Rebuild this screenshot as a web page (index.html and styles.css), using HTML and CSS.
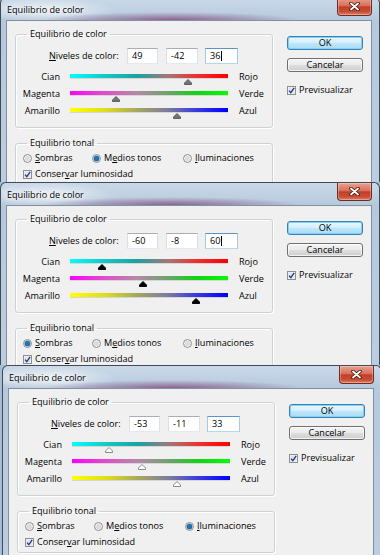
FILE: index.html
```html
<!DOCTYPE html>
<html lang="es">
<head>
    <meta charset="UTF-8">
    <title>Equilibrio de color</title>
    <link rel="stylesheet" href="styles.css">
</head>
<body>

    <!-- dialogo 1: medios tonos -->
    <div class="dlg d1">
        <div class="titlebar">
            <span class="title">Equilibrio de color</span>
            <span class="close"><svg width="11" height="9" viewBox="0 0 11 9"><path d="M2 1.5 L9 7.5 M9 1.5 L2 7.5" stroke="#4b1b14" stroke-width="3.6" stroke-linecap="round"/><path d="M2 1.5 L9 7.5 M9 1.5 L2 7.5" stroke="#fff" stroke-width="1.8" stroke-linecap="round"/></svg></span>
        </div>
        <div class="client">
            <div class="col-left">
                <fieldset class="group g-color">
                    <legend>Equilibrio de color</legend>
                    <div class="levels">
                        <span class="lvl-label"><u>N</u>iveles de color:</span>
                        <span class="field f1">49</span>
                        <span class="field f2">-42</span>
                        <span class="field f3 focus">36<i class="caret"></i></span>
                    </div>
                    <div class="slider first">
                        <span class="s-left">Cian</span>
                        <div class="s-track">
                            <div class="bar bar-cr"></div>
                            <svg class="thumb" style="margin-left: 113.7px" width="8" height="6" viewBox="0 0 8 6"><polygon points="4,0.5 7.5,4 7.5,5.5 0.5,5.5 0.5,4"/></svg>
                        </div>
                        <span class="s-right">Rojo</span>
                    </div>
                    <div class="slider">
                        <span class="s-left">Magenta</span>
                        <div class="s-track">
                            <div class="bar bar-mv"></div>
                            <svg class="thumb" style="margin-left: 41.8px" width="8" height="6" viewBox="0 0 8 6"><polygon points="4,0.5 7.5,4 7.5,5.5 0.5,5.5 0.5,4"/></svg>
                        </div>
                        <span class="s-right">Verde</span>
                    </div>
                    <div class="slider">
                        <span class="s-left">Amarillo</span>
                        <div class="s-track">
                            <div class="bar bar-aa"></div>
                            <svg class="thumb" style="margin-left: 103.4px" width="8" height="6" viewBox="0 0 8 6"><polygon points="4,0.5 7.5,4 7.5,5.5 0.5,5.5 0.5,4"/></svg>
                        </div>
                        <span class="s-right">Azul</span>
                    </div>
                </fieldset>

                <fieldset class="group g-tonal">
                    <legend>Equilibrio tonal</legend>
                    <div class="radios">
                        <span class="opt o1"><svg class="radio" width="9" height="9" viewBox="0 0 9 9"><circle cx="4.5" cy="4.5" r="4" class="r-out"/><circle cx="4.5" cy="4.5" r="2.6" class="r-in"/></svg><span><u>S</u>ombras</span></span>
                        <span class="opt o2"><svg class="radio on" width="9" height="9" viewBox="0 0 9 9"><circle cx="4.5" cy="4.5" r="4" class="r-out"/><circle cx="4.5" cy="4.5" r="2.6" class="r-in"/></svg><span>M<u>e</u>dios tonos</span></span>
                        <span class="opt o3"><svg class="radio" width="9" height="9" viewBox="0 0 9 9"><circle cx="4.5" cy="4.5" r="4" class="r-out"/><circle cx="4.5" cy="4.5" r="2.6" class="r-in"/></svg><span><u>I</u>luminaciones</span></span>
                    </div>
                    <div class="check">
                        <svg class="cbox" width="9" height="9" viewBox="0 0 9 9"><rect x="0.5" y="0.5" width="8" height="8" fill="#f6f6f6" stroke="#8e8f8f"/><rect x="1.5" y="1.5" width="6" height="6" fill="#dfe5ec"/><path d="M2 4.6 L3.8 6.6 L7.2 1.8" fill="none" stroke="#23398c" stroke-width="1.3"/></svg>
                        <span>Conser<u>v</u>ar luminosidad</span>
                    </div>
                </fieldset>
            </div>

            <div class="col-right">
                <div class="btn btn-ok">OK</div>
                <div class="btn">Cancelar</div>
                <div class="check prev">
                    <svg class="cbox" width="9" height="9" viewBox="0 0 9 9"><rect x="0.5" y="0.5" width="8" height="8" fill="#f6f6f6" stroke="#8e8f8f"/><rect x="1.5" y="1.5" width="6" height="6" fill="#dfe5ec"/><path d="M2 4.6 L3.8 6.6 L7.2 1.8" fill="none" stroke="#23398c" stroke-width="1.3"/></svg>
                    <span>Previsualizar</span>
                </div>
            </div>
        </div>
    </div>

    <!-- dialogo 2: sombras -->
    <div class="dlg d2">
        <div class="titlebar">
            <span class="title">Equilibrio de color</span>
            <span class="close"><svg width="11" height="9" viewBox="0 0 11 9"><path d="M2 1.5 L9 7.5 M9 1.5 L2 7.5" stroke="#4b1b14" stroke-width="3.6" stroke-linecap="round"/><path d="M2 1.5 L9 7.5 M9 1.5 L2 7.5" stroke="#fff" stroke-width="1.8" stroke-linecap="round"/></svg></span>
        </div>
        <div class="client">
            <div class="col-left">
                <fieldset class="group g-color">
                    <legend>Equilibrio de color</legend>
                    <div class="levels">
                        <span class="lvl-label"><u>N</u>iveles de color:</span>
                        <span class="field f1">-60</span>
                        <span class="field f2">-8</span>
                        <span class="field f3 focus">60<i class="caret"></i></span>
                    </div>
                    <div class="slider first">
                        <span class="s-left">Cian</span>
                        <div class="s-track">
                            <div class="bar bar-cr"></div>
                            <svg class="thumb" style="margin-left: 27.6px" width="8" height="6" viewBox="0 0 8 6"><polygon points="4,0.5 7.5,4 7.5,5.5 0.5,5.5 0.5,4"/></svg>
                        </div>
                        <span class="s-right">Rojo</span>
                    </div>
                    <div class="slider">
                        <span class="s-left">Magenta</span>
                        <div class="s-track">
                            <div class="bar bar-mv"></div>
                            <svg class="thumb" style="margin-left: 68.7px" width="8" height="6" viewBox="0 0 8 6"><polygon points="4,0.5 7.5,4 7.5,5.5 0.5,5.5 0.5,4"/></svg>
                        </div>
                        <span class="s-right">Verde</span>
                    </div>
                    <div class="slider">
                        <span class="s-left">Amarillo</span>
                        <div class="s-track">
                            <div class="bar bar-aa"></div>
                            <svg class="thumb" style="margin-left: 122.4px" width="8" height="6" viewBox="0 0 8 6"><polygon points="4,0.5 7.5,4 7.5,5.5 0.5,5.5 0.5,4"/></svg>
                        </div>
                        <span class="s-right">Azul</span>
                    </div>
                </fieldset>

                <fieldset class="group g-tonal">
                    <legend>Equilibrio tonal</legend>
                    <div class="radios">
                        <span class="opt o1"><svg class="radio on" width="9" height="9" viewBox="0 0 9 9"><circle cx="4.5" cy="4.5" r="4" class="r-out"/><circle cx="4.5" cy="4.5" r="2.6" class="r-in"/></svg><span><u>S</u>ombras</span></span>
                        <span class="opt o2"><svg class="radio" width="9" height="9" viewBox="0 0 9 9"><circle cx="4.5" cy="4.5" r="4" class="r-out"/><circle cx="4.5" cy="4.5" r="2.6" class="r-in"/></svg><span>M<u>e</u>dios tonos</span></span>
                        <span class="opt o3"><svg class="radio" width="9" height="9" viewBox="0 0 9 9"><circle cx="4.5" cy="4.5" r="4" class="r-out"/><circle cx="4.5" cy="4.5" r="2.6" class="r-in"/></svg><span><u>I</u>luminaciones</span></span>
                    </div>
                    <div class="check">
                        <svg class="cbox" width="9" height="9" viewBox="0 0 9 9"><rect x="0.5" y="0.5" width="8" height="8" fill="#f6f6f6" stroke="#8e8f8f"/><rect x="1.5" y="1.5" width="6" height="6" fill="#dfe5ec"/><path d="M2 4.6 L3.8 6.6 L7.2 1.8" fill="none" stroke="#23398c" stroke-width="1.3"/></svg>
                        <span>Conser<u>v</u>ar luminosidad</span>
                    </div>
                </fieldset>
            </div>

            <div class="col-right">
                <div class="btn btn-ok">OK</div>
                <div class="btn">Cancelar</div>
                <div class="check prev">
                    <svg class="cbox" width="9" height="9" viewBox="0 0 9 9"><rect x="0.5" y="0.5" width="8" height="8" fill="#f6f6f6" stroke="#8e8f8f"/><rect x="1.5" y="1.5" width="6" height="6" fill="#dfe5ec"/><path d="M2 4.6 L3.8 6.6 L7.2 1.8" fill="none" stroke="#23398c" stroke-width="1.3"/></svg>
                    <span>Previsualizar</span>
                </div>
            </div>
        </div>
    </div>

    <!-- dialogo 3: iluminaciones -->
    <div class="dlg d3">
        <div class="titlebar">
            <span class="title">Equilibrio de color</span>
            <span class="close"><svg width="11" height="9" viewBox="0 0 11 9"><path d="M2 1.5 L9 7.5 M9 1.5 L2 7.5" stroke="#4b1b14" stroke-width="3.6" stroke-linecap="round"/><path d="M2 1.5 L9 7.5 M9 1.5 L2 7.5" stroke="#fff" stroke-width="1.8" stroke-linecap="round"/></svg></span>
        </div>
        <div class="client">
            <div class="col-left">
                <fieldset class="group g-color">
                    <legend>Equilibrio de color</legend>
                    <div class="levels">
                        <span class="lvl-label"><u>N</u>iveles de color:</span>
                        <span class="field f1">-53</span>
                        <span class="field f2">-11</span>
                        <span class="field f3 focus">33</span>
                    </div>
                    <div class="slider first">
                        <span class="s-left">Cian</span>
                        <div class="s-track">
                            <div class="bar bar-cr"></div>
                            <svg class="thumb" style="margin-left: 33.1px" width="8" height="6" viewBox="0 0 8 6"><polygon points="4,0.5 7.5,4 7.5,5.5 0.5,5.5 0.5,4"/></svg>
                        </div>
                        <span class="s-right">Rojo</span>
                    </div>
                    <div class="slider">
                        <span class="s-left">Magenta</span>
                        <div class="s-track">
                            <div class="bar bar-mv"></div>
                            <svg class="thumb" style="margin-left: 66.3px" width="8" height="6" viewBox="0 0 8 6"><polygon points="4,0.5 7.5,4 7.5,5.5 0.5,5.5 0.5,4"/></svg>
                        </div>
                        <span class="s-right">Verde</span>
                    </div>
                    <div class="slider">
                        <span class="s-left">Amarillo</span>
                        <div class="s-track">
                            <div class="bar bar-aa"></div>
                            <svg class="thumb" style="margin-left: 101.1px" width="8" height="6" viewBox="0 0 8 6"><polygon points="4,0.5 7.5,4 7.5,5.5 0.5,5.5 0.5,4"/></svg>
                        </div>
                        <span class="s-right">Azul</span>
                    </div>
                </fieldset>

                <fieldset class="group g-tonal">
                    <legend>Equilibrio tonal</legend>
                    <div class="radios">
                        <span class="opt o1"><svg class="radio" width="9" height="9" viewBox="0 0 9 9"><circle cx="4.5" cy="4.5" r="4" class="r-out"/><circle cx="4.5" cy="4.5" r="2.6" class="r-in"/></svg><span><u>S</u>ombras</span></span>
                        <span class="opt o2"><svg class="radio" width="9" height="9" viewBox="0 0 9 9"><circle cx="4.5" cy="4.5" r="4" class="r-out"/><circle cx="4.5" cy="4.5" r="2.6" class="r-in"/></svg><span>M<u>e</u>dios tonos</span></span>
                        <span class="opt o3"><svg class="radio on" width="9" height="9" viewBox="0 0 9 9"><circle cx="4.5" cy="4.5" r="4" class="r-out"/><circle cx="4.5" cy="4.5" r="2.6" class="r-in"/></svg><span><u>I</u>luminaciones</span></span>
                    </div>
                    <div class="check">
                        <svg class="cbox" width="9" height="9" viewBox="0 0 9 9"><rect x="0.5" y="0.5" width="8" height="8" fill="#f6f6f6" stroke="#8e8f8f"/><rect x="1.5" y="1.5" width="6" height="6" fill="#dfe5ec"/><path d="M2 4.6 L3.8 6.6 L7.2 1.8" fill="none" stroke="#23398c" stroke-width="1.3"/></svg>
                        <span>Conser<u>v</u>ar luminosidad</span>
                    </div>
                </fieldset>
            </div>

            <div class="col-right">
                <div class="btn btn-ok">OK</div>
                <div class="btn">Cancelar</div>
                <div class="check prev">
                    <svg class="cbox" width="9" height="9" viewBox="0 0 9 9"><rect x="0.5" y="0.5" width="8" height="8" fill="#f6f6f6" stroke="#8e8f8f"/><rect x="1.5" y="1.5" width="6" height="6" fill="#dfe5ec"/><path d="M2 4.6 L3.8 6.6 L7.2 1.8" fill="none" stroke="#23398c" stroke-width="1.3"/></svg>
                    <span>Previsualizar</span>
                </div>
            </div>
        </div>
    </div>

</body>
</html>
```

FILE: styles.css
```css
* {
    box-sizing: border-box;
}

body {
    margin: 0;
    width: 380px;
    height: 555px;
    overflow: hidden;
    background: #a9bdd2;
    font-family: "Open Sans", "Noto Sans", sans-serif;
    font-size: 9.1px;
    color: #000;
}

u {
    text-decoration-thickness: 1px;
    text-underline-offset: 1px;
}

/* ventana */
.dlg {
    width: 380px;
    border: 1px solid #3e4c5a;
    border-bottom: 0;
    border-radius: 6px 6px 0 0;
    padding: 0 7px 0 5px;
    overflow: hidden;
    background:
        radial-gradient(ellipse 130px 8px at 170px 22px, rgba(120, 55, 110, 0.7), rgba(120, 55, 110, 0)),
        radial-gradient(ellipse 70px 12px at 45px 12px, rgba(255, 255, 255, 0.75), rgba(255, 255, 255, 0)),
        linear-gradient(#cad9e8, #b6c9dc 22px, #bccddf);
}

.d1 {
    margin-top: -3px;
    height: 185px;
}

.d2 {
    height: 183px;
}

.d3 {
    height: 190px;
    margin-left: 2px;
}

.titlebar {
    height: 22px;
    display: flex;
    align-items: flex-start;
}

.title {
    padding: 6px 0 0 1px;
    line-height: 12px;
    text-shadow: 0 0 5px #fff, 0 0 8px #fff;
}

.close {
    margin-left: auto;
    width: 35px;
    height: 18px;
    display: flex;
    align-items: center;
    justify-content: center;
    border: 1px solid #6b2e26;
    border-top: 0;
    border-radius: 0 0 4px 4px;
    background: linear-gradient(#e9a291, #d8705a 45%, #c23f28 52%, #c94c33 80%, #df7f62);
    box-shadow: inset 0 0 0 1px rgba(255, 255, 255, 0.3);
}

.client {
    height: 200px;
    display: flex;
    align-items: flex-start;
    background: #f0f0f0;
    border: 1px solid #7f91a3;
}

.col-left {
    margin-left: 8px;
}

/* cuadros de grupo */
.group {
    width: 258px;
    margin: 7px 0 0 0;
    padding: 0;
    min-width: 0;
    border: 1px solid #cdd2d7;
    border-radius: 3px;
    box-shadow: inset 1px 1px 0 #fff, 1px 1px 0 #fff;
}

.group legend {
    margin-left: 11px;
    padding: 0 3px;
    line-height: 12px;
}

.g-color {
    padding-bottom: 5px;
}

.g-tonal {
    margin-top: 9px;
    padding-bottom: 4px;
}

.levels {
    display: flex;
    height: 16px;
    margin-top: 8px;
    padding-left: 33px;
}

.lvl-label {
    width: 78px;
    line-height: 16px;
}

.field {
    height: 16px;
    padding-left: 4px;
    line-height: 14px;
    background: #fff;
    border: 1px solid #dbdfe6;
    border-top-color: #abadb3;
    border-bottom-color: #e3e9ef;
}

.f1 {
    width: 31px;
}

.f2 {
    width: 32px;
    margin-left: 8px;
}

.f3 {
    width: 33px;
    margin-left: 7px;
}

.field.focus {
    border-color: #a4c9e3;
    border-top-color: #5a95c4;
    border-bottom-color: #b7d9ed;
}

.caret {
    display: inline-block;
    width: 1px;
    height: 10px;
    margin-left: 1px;
    vertical-align: -2px;
    background: #000;
}

/* deslizadores */
.slider {
    display: flex;
    height: 17px;
}

.slider.first {
    margin-top: 7px;
}

.s-left {
    width: 44px;
    text-align: right;
    line-height: 12px;
}

.s-track {
    width: 158px;
    margin-left: 10px;
    padding-top: 3px;
}

.s-right {
    margin-left: 11px;
    line-height: 12px;
}

.bar {
    height: 4px;
    box-shadow: 0 1px 0 #d6d6d6;
}

.bar-cr {
    background: linear-gradient(90deg, #00ffff 0%, #14c8c6 22%, #1ba3a1 42%, #a27676 62%, #ee3030 80%, #ff0000 100%);
}

.bar-mv {
    background: linear-gradient(90deg, #ff00ff 0%, #e04ec8 22%, #b48aa8 42%, #6aa46a 62%, #12d412 80%, #00ff00 100%);
}

.bar-aa {
    background: linear-gradient(90deg, #ffff00 0%, #dede18 22%, #a8a860 42%, #7a7aa0 62%, #3a3ae0 80%, #0000ff 100%);
}

.thumb {
    display: block;
    margin-top: 1px;
}

.d1 .thumb polygon {
    fill: #737373;
    stroke: #5e5e5e;
}

.d2 .thumb polygon {
    fill: #000;
    stroke: #000;
}

.d3 .thumb polygon {
    fill: #fff;
    stroke: #8a8a8a;
}

/* opciones */
.radios {
    display: flex;
    height: 12px;
    margin-top: 3px;
    padding-left: 7px;
}

.opt {
    display: flex;
    align-items: center;
    gap: 3px;
    line-height: 12px;
}

.o1 {
    width: 69px;
}

.o2 {
    width: 91px;
}

.radio .r-out {
    fill: #f2f2f2;
    stroke: #8e8f8f;
    stroke-width: 1;
}

.radio .r-in {
    fill: #dcdcdc;
}

.radio.on .r-in {
    fill: #1c78b8;
    stroke: #0d4f86;
    stroke-width: 0.6;
}

.check {
    display: flex;
    align-items: center;
    gap: 3px;
    height: 12px;
    line-height: 12px;
    margin-top: 4px;
    padding-left: 7px;
}

/* botones */
.col-right {
    margin: 15px 0 0 14px;
}

.btn {
    width: 76px;
    height: 14px;
    line-height: 12px;
    text-align: center;
    border: 1px solid #707070;
    border-radius: 3px;
    background: linear-gradient(#f3f3f3, #ebebeb 48%, #dddddd 52%, #cfcfcf);
    box-shadow: inset 0 0 0 1px rgba(255, 255, 255, 0.7);
}

.btn + .btn {
    margin-top: 8px;
}

.btn-ok {
    border-color: #3c7fb1;
    background: linear-gradient(#e8f6fd, #d5effc 48%, #bfe6fa 52%, #a9dcf6);
    box-shadow: inset 0 0 0 1px #7fd2f8;
}

.check.prev {
    margin-top: 12px;
    padding-left: 0;
}
```
